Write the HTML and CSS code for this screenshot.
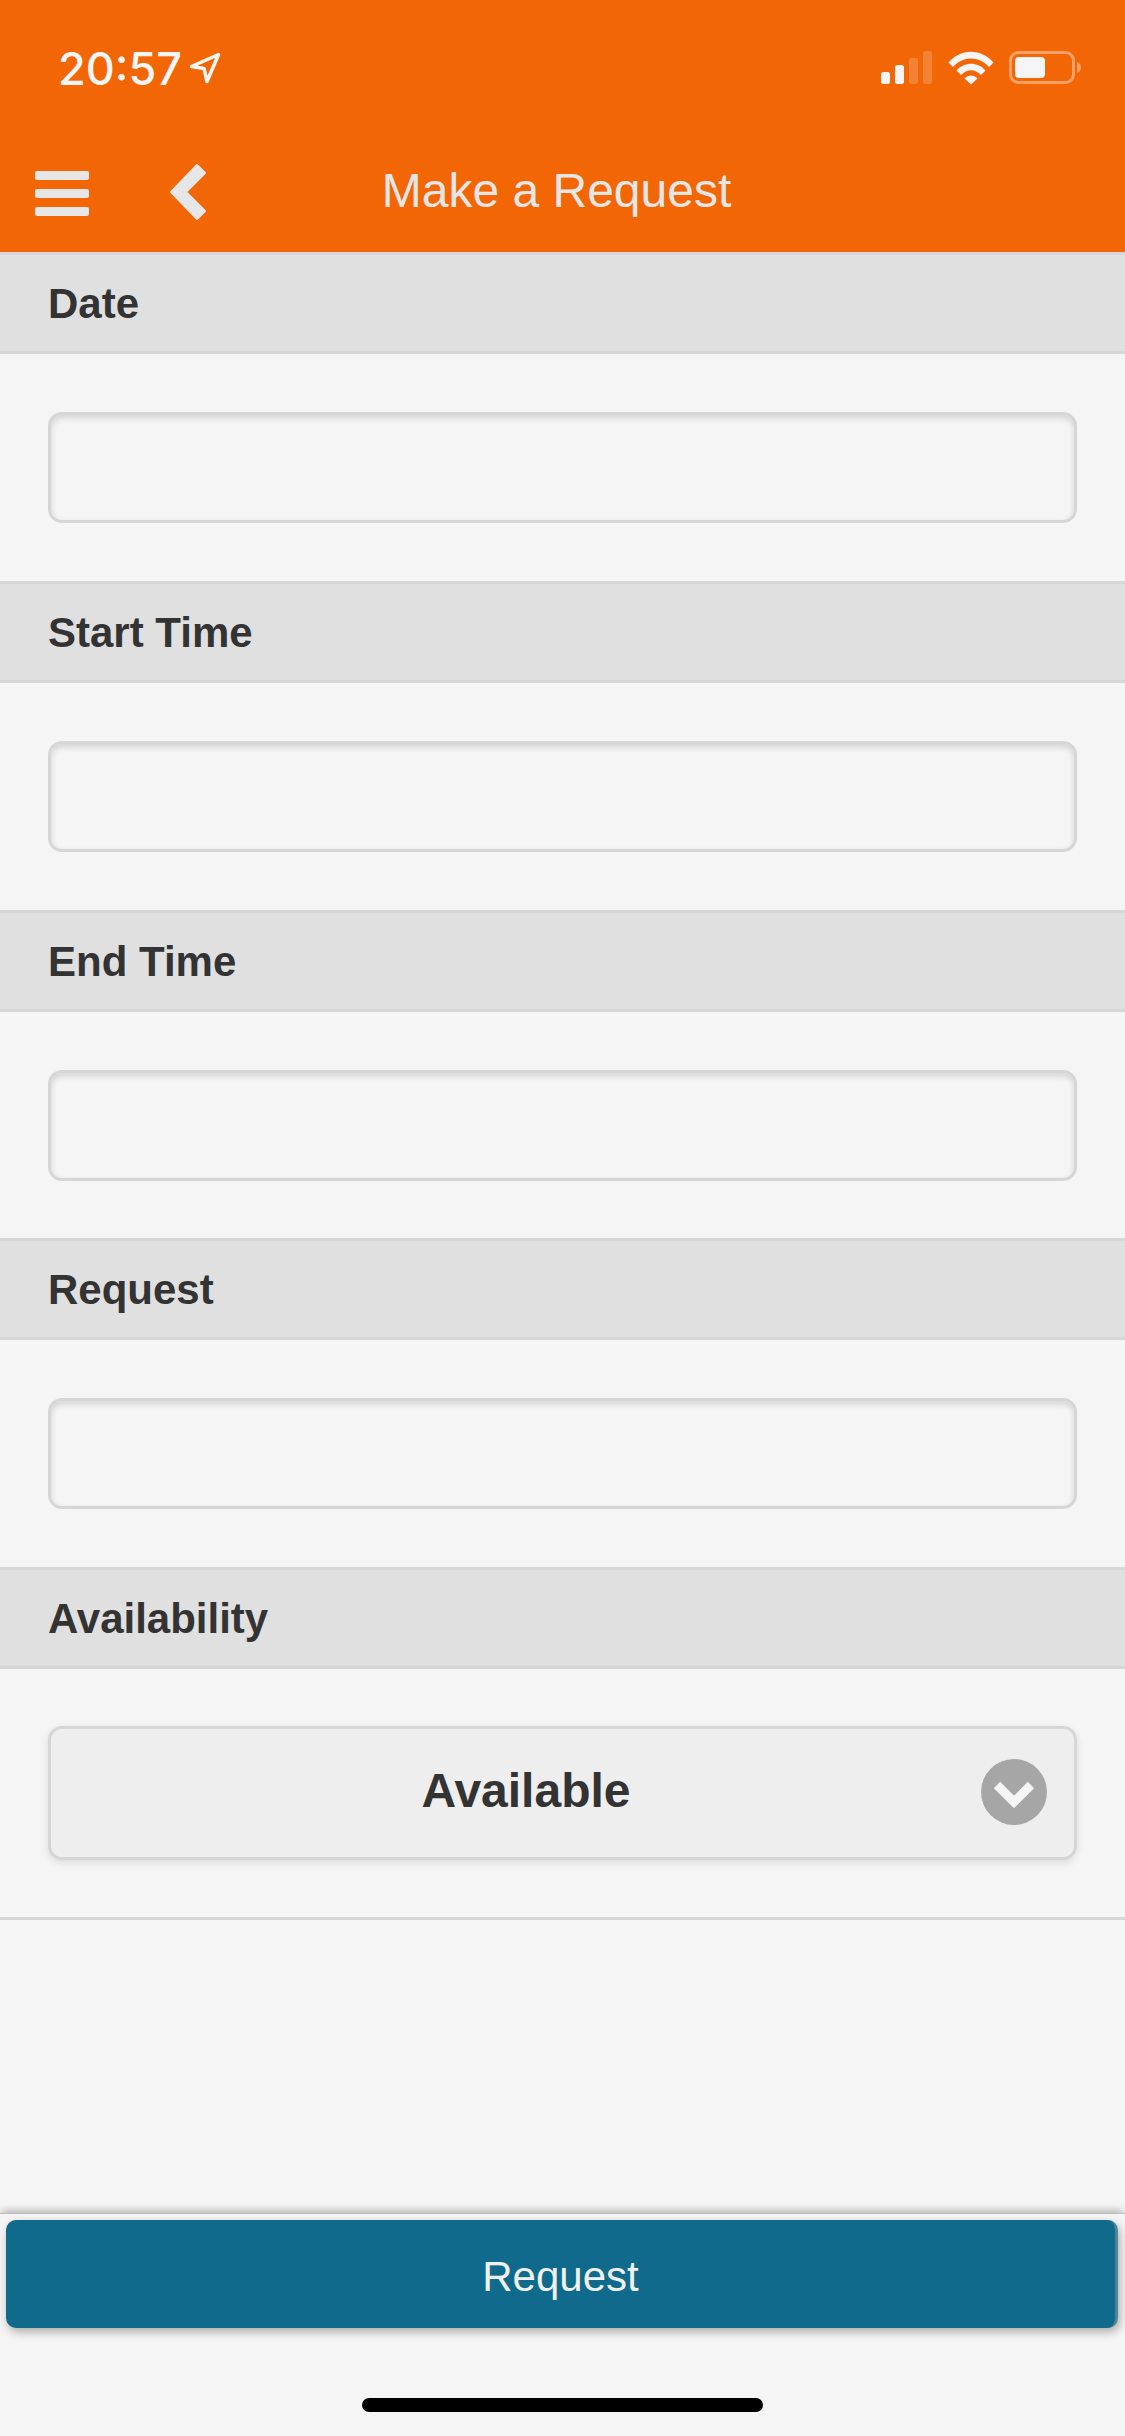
FILE: index.html
```html
<!DOCTYPE html>
<html lang="en">
<head>
    <meta charset="UTF-8">
    <meta name="viewport" content="width=device-width, initial-scale=1.0">
    <title>Make a Request</title>
    <link rel="stylesheet" href="styles.css">
</head>
<body>
    <div class="top-bar">
        <div class="status-bar">
            <div class="status-time">
                <span>20:57</span>
                <svg class="location-icon" width="32" height="32" viewBox="0 0 32 32" fill="none">
                    <path d="M29.5 2.5 2.5 14.5 15 16.5 18 29.5Z" stroke="#f5f5f5" stroke-width="3.500" stroke-linejoin="round"/>
                </svg>
            </div>
            <div class="status-icons">
                <svg width="52" height="34" viewBox="0 0 52 34">
                    <rect x="0" y="21" width="9" height="12" rx="2.5" fill="#f5f5f5"/>
                    <rect x="14" y="14" width="9" height="19" rx="2.5" fill="#f5f5f5"/>
                    <rect x="28" y="7" width="9" height="26" rx="2.5" fill="#f5f5f5" opacity="0.2"/>
                    <rect x="42" y="0" width="9" height="33" rx="2.5" fill="#f5f5f5" opacity="0.2"/>
                </svg>
                <svg width="46" height="34" viewBox="0 0 46 34" fill="#f5f5f5">
                    <path d="M0.5 11.5C13 -3 33 -3 45.5 11.5L41 16C31 4.500 15 4.500 5 16Z"/>
                    <path d="M8.500 19.500C16 10.500 30 10.500 37.500 19.500L33 24C27 17.500 19 17.500 13 24Z"/>
                    <path d="M16.500 27.500C20 23.500 26 23.500 29.500 27.500L23 33.500Z"/>
                </svg>
                <svg width="74" height="34" viewBox="0 0 74 34">
                    <rect x="1.500" y="1.500" width="63" height="30" rx="8" fill="none" stroke="#f5f5f5" stroke-opacity="0.4" stroke-width="3"/>
                    <rect x="6" y="6" width="30" height="21" rx="4" fill="#f5f5f5"/>
                    <path d="M68 11C71 12 72 14 72 16.500C72 19 71 21 68 22Z" fill="#f5f5f5" fill-opacity="0.4"/>
                </svg>
            </div>
        </div>
        <div class="nav-bar">
            <div class="menu-icon">
                <span></span>
                <span></span>
                <span></span>
            </div>
            <svg class="back-icon" width="38" height="58" viewBox="0 0 38 58">
                <path d="M28 2 36 10 17 29 36 48 28 56 2 29Z" fill="#e6e6e6" stroke="#e6e6e6" stroke-width="2" stroke-linejoin="round"/>
            </svg>
            <h1 class="nav-title">Make a Request</h1>
        </div>
    </div>

    <div class="form">
        <div class="field">
            <div class="field-label">Date</div>
            <div class="field-body"><input class="text-input" type="text"></div>
        </div>
        <div class="field">
            <div class="field-label">Start Time</div>
            <div class="field-body"><input class="text-input" type="text"></div>
        </div>
        <div class="field">
            <div class="field-label">End Time</div>
            <div class="field-body"><input class="text-input" type="text"></div>
        </div>
        <div class="field">
            <div class="field-label">Request</div>
            <div class="field-body"><input class="text-input" type="text"></div>
        </div>
        <div class="field field-last">
            <div class="field-label">Availability</div>
            <div class="field-body select-body">
                <div class="select-box">
                    <span class="select-text">Available</span>
                    <span class="select-arrow">
                        <svg width="66" height="66" viewBox="0 0 66 66">
                            <circle cx="33" cy="33" r="33" fill="#a6a6a6"/>
                            <path d="M16 26 33 43 50 26" fill="none" stroke="#f5f5f5" stroke-width="9"/>
                        </svg>
                    </span>
                </div>
            </div>
        </div>
    </div>

    <div class="footer">
        <button class="request-button">Request</button>
        <div class="home-indicator"></div>
    </div>
</body>
</html>
```

FILE: styles.css
```css
:root {
    --primary-color: #f36605;
    --light-bg: #f5f5f5;
    --label-bg: #e0e0e0;
    --line-color: #d6d6d6;
    --text-color: #333;
    --button-color: #0f6a8b;
}

* {
    box-sizing: border-box;
    margin: 0;
    padding: 0;
}

body {
    font-family: 'Liberation Sans', Arial, sans-serif;
    background-color: var(--light-bg);
    display: flex;
    flex-direction: column;
    height: 100vh;
    overflow: hidden;
}

.top-bar {
    background-color: var(--primary-color);
    height: 252px;
    flex-shrink: 0;
}

.status-bar {
    height: 134px;
    display: flex;
    align-items: center;
    justify-content: space-between;
    padding: 2px 42px 0 58px;
}

.status-time {
    display: flex;
    align-items: center;
    gap: 7px;
    font-family: Inter, sans-serif;
    font-weight: 500;
    font-size: 45px;
    color: #f5f5f5;
}

.status-icons {
    display: flex;
    align-items: center;
    gap: 15px;
}

.nav-bar {
    height: 118px;
    display: flex;
    align-items: center;
    padding-left: 35px;
}

.menu-icon {
    width: 54px;
    display: flex;
    flex-direction: column;
    gap: 9px;
    margin-right: 80px;
}

.menu-icon span {
    height: 9px;
    background-color: #e6e6e6;
    border-radius: 2px;
}

.back-icon {
    margin-bottom: 3px;
}

.nav-title {
    flex: 1;
    padding: 0 219px 5px 0;
    text-align: center;
    font-size: 48px;
    font-weight: normal;
    color: #e6e6e6;
}

.field-label {
    height: 102px;
    display: flex;
    align-items: center;
    padding: 2px 0 0 48px;
    background-color: var(--label-bg);
    border-top: 3px solid var(--line-color);
    border-bottom: 3px solid var(--line-color);
    font-size: 42px;
    font-weight: bold;
    color: var(--text-color);
}

.field-body {
    padding: 58px 48px 57.75px;
}

.text-input {
    display: block;
    width: 100%;
    height: 111px;
    background-color: var(--light-bg);
    border: 3px solid var(--line-color);
    border-radius: 14px;
    box-shadow: inset 0 3px 6px rgba(0,0,0,0.14);
    outline: none;
}

.select-body {
    padding-top: 57px;
    padding-bottom: 57px;
    border-bottom: 3px solid var(--line-color);
}

.select-box {
    height: 134px;
    display: flex;
    align-items: center;
    position: relative;
    background-color: #eeeeee;
    border: 3px solid var(--line-color);
    border-radius: 14px;
    box-shadow: 0 3px 8px rgba(0,0,0,0.1);
}

.select-text {
    flex: 1;
    padding: 0 73px 5px 0;
    text-align: center;
    font-size: 48px;
    font-weight: bold;
    color: var(--text-color);
}

.select-arrow {
    position: absolute;
    right: 27px;
    top: 30px;
    line-height: 0;
}

.footer {
    margin-top: auto;
    height: 223px;
    flex-shrink: 0;
    position: relative;
    padding: 6px 7px 0 6px;
    background-color: var(--light-bg);
    border-top: 1px solid #bdbdbd;
    box-shadow: 0 -4px 8px -2px rgba(0,0,0,0.3);
}

.request-button {
    display: block;
    width: 100%;
    height: 108px;
    padding-top: 6px;
    background-color: var(--button-color);
    color: #f0f0f0;
    border: none;
    border-right: 3px solid #4f8499;
    border-radius: 10px;
    font-family: inherit;
    font-size: 42px;
    box-shadow: 2px 4px 10px rgba(0,0,0,0.3);
}

.home-indicator {
    width: 401px;
    height: 14px;
    margin: 70px auto 0;
    background-color: #000;
    border-radius: 7px;
}
```
